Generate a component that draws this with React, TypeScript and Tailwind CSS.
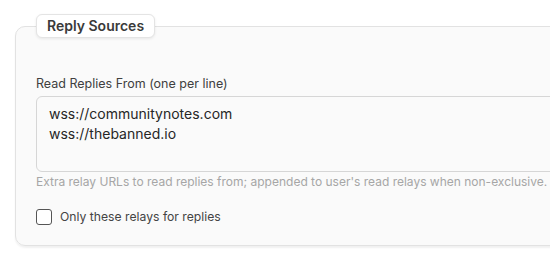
import { useState } from 'react';

export default function App() {
  const [exclusive, setExclusive] = useState(false);

  return (
    <div className="w-[550px] h-[263px] overflow-hidden bg-white font-['Inter',sans-serif] pt-[14px] pl-[15px]">
      <fieldset className="w-[600px] rounded-[10px] border border-[#e2e2e2] bg-[#fafafa] shadow-[0_2px_2px_rgba(0,0,0,0.06)] px-5 pb-[19px]">
        <legend className="h-6 px-[10px] rounded-md border border-[#e4e4e4] bg-white shadow-[0_1px_3px_rgba(0,0,0,0.08)] text-[14px] font-semibold leading-[22px] text-[#3a3a3a]">
          Reply Sources
        </legend>

        <label className="block mt-[38px] mb-[4px] text-[12.5px] leading-4 text-[#404040]">
          Read Replies From (one per line)
        </label>
        <textarea
          className="block w-full h-[76px] resize-none rounded-md border border-[#d6d6d6] bg-[#fafafa] px-3 pt-[7px] pb-[6px] text-[14px] leading-5 text-[#262626] outline-none"
          defaultValue={'wss://communitynotes.com\nwss://thebanned.io'}
        />
        <p className="mt-[2px] text-[12px] leading-4 text-[#a6a6a6]">
          Extra relay URLs to read replies from; appended to user's read relays when non-exclusive.
        </p>

        <label className="mt-[18px] flex items-center gap-2 text-[12.2px] text-[#444] cursor-pointer">
          <input
            type="checkbox"
            checked={exclusive}
            onChange={(e) => setExclusive(e.target.checked)}
            className="appearance-none w-4 h-4 rounded-[3px] border-[1.5px] border-[#555] bg-white"
          />
          Only these relays for replies
        </label>
      </fieldset>
    </div>
  );
}
